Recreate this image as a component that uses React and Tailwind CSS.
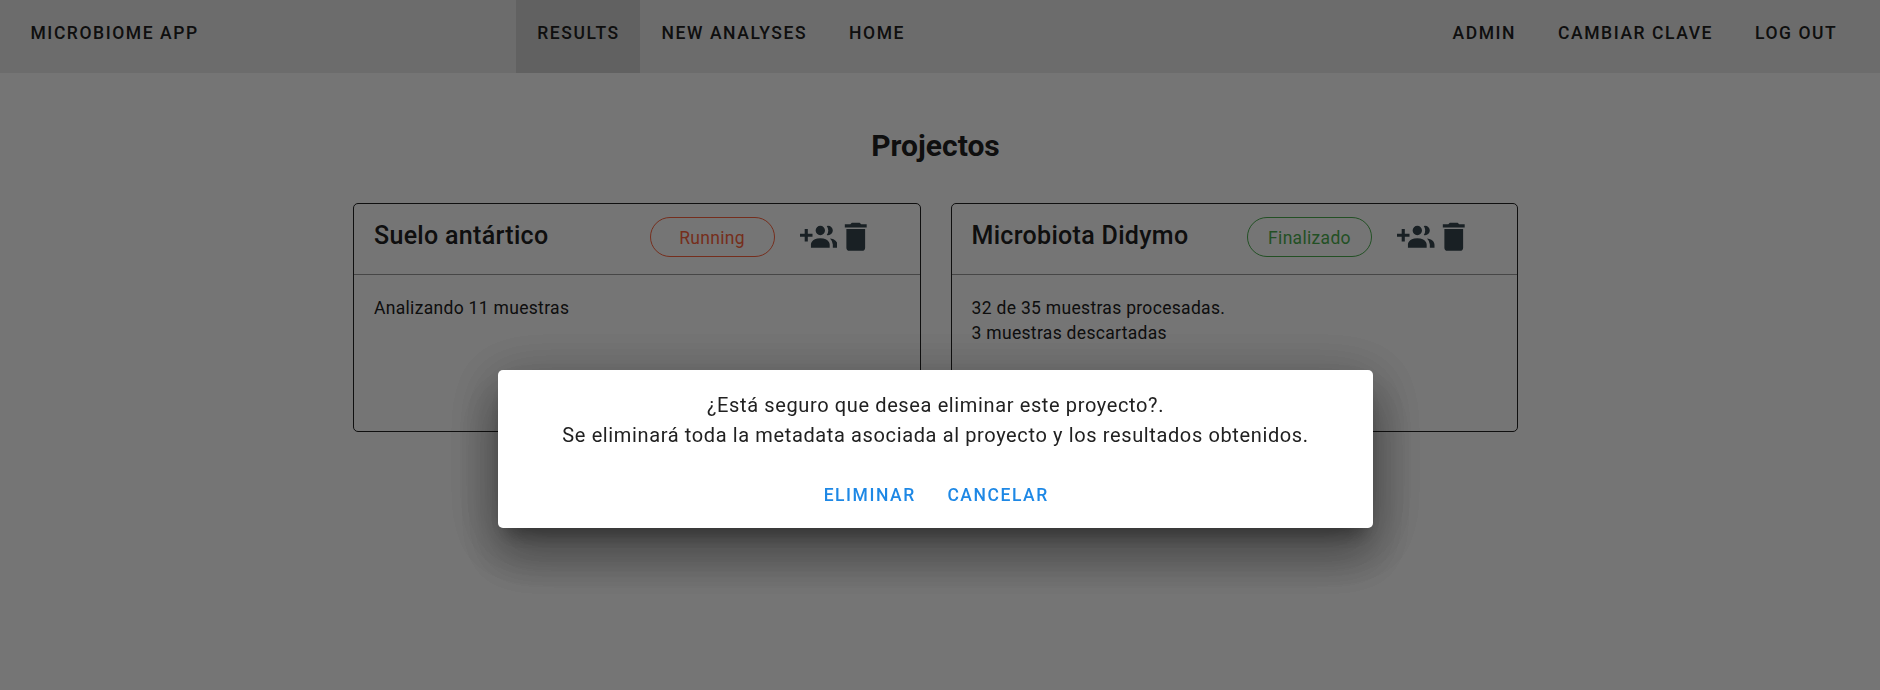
const PLUS_PEOPLE =
  'M19 17V19H7V17S7 13 13 13 19 17 19 17M16 8A3 3 0 1 0 13 11A3 3 0 0 0 16 8M19.2 13.06A5.6 5.6 0 0 1 21 17V19H24V17S24 13.55 19.2 13.06M18 5A2.91 2.91 0 0 0 17.11 5.14A5 5 0 0 1 17.11 10.86A2.91 2.91 0 0 0 18 11A3 3 0 0 0 18 5M8 10H5V7H3V10H0V12H3V15H5V12H8Z';
const TRASH =
  'M19,4H15.5L14.5,3H9.5L8.5,4H5V6H19V4M6,19A2,2 0 0,0 8,21H16A2,2 0 0,0 18,19V7H6V19Z';

function Icon({ path }) {
  return (
    <svg viewBox="0 0 24 24" className="size-[37.5px] shrink-0 fill-[#37474f]">
      <path d={path} />
    </svg>
  );
}

function NavButton({ children, active }) {
  return (
    <button
      className={`flex h-full items-center pr-[20.7px] pb-[6px] pl-[21.3px] uppercase ${active ? 'bg-[#d4d4d4]' : ''}`}
    >
      {children}
    </button>
  );
}

function ProjectCard({ title, status, statusClass, lines }) {
  return (
    <article className="flex h-[229px] flex-1 flex-col rounded-[5px] border border-[#212121]">
      <header className="flex h-[71px] items-start border-b border-black/40 pt-[13px] pl-5">
        <h3 className="w-[275.5px] pt-[1px] text-[25px] leading-[36px] font-medium tracking-[0.0125em]">
          {title}
        </h3>
        <span
          className={`flex h-10 w-[125px] items-center justify-center rounded-full border pt-[2px] text-[17.5px] tracking-[0.0178571429em] ${statusClass}`}
        >
          {status}
        </span>
        <div className="mt-[1px] ml-[25.3px] flex">
          <Icon path={PLUS_PEOPLE} />
          <Icon path={TRASH} />
        </div>
      </header>
      <div className="px-5 pt-[21px] text-[17.5px] leading-[25px] tracking-[0.0178571429em]">
        {lines.map((line) => (
          <p key={line}>{line}</p>
        ))}
      </div>
    </article>
  );
}

export default function App() {
  return (
    <div className="h-[690px] overflow-hidden bg-white font-[Roboto,sans-serif] text-[#212121]">
      <nav className="flex h-[73px] bg-[#ebebeb] pr-[22px] pl-[30.5px] text-[17.5px] font-medium tracking-[0.0892857143em]">
        <div className="flex w-[485.5px] items-center pb-[6px] uppercase">Microbiome App</div>
        <NavButton active>Results</NavButton>
        <NavButton>New Analyses</NavButton>
        <NavButton>Home</NavButton>
        <div className="ml-auto flex">
          <NavButton>Admin</NavButton>
          <NavButton>Cambiar clave</NavButton>
          <NavButton>Log out</NavButton>
        </div>
      </nav>

      <main className="ml-[353px] w-[1165px] pt-[50px]">
        <h2 className="h-20 text-center text-[30px] leading-[45px] font-bold">Projectos</h2>
        <div className="flex gap-[30px]">
          <ProjectCard
            title="Suelo antártico"
            status="Running"
            statusClass="border-[#ff6540] text-[#ff6540]"
            lines={['Analizando 11 muestras']}
          />
          <ProjectCard
            title="Microbiota Didymo"
            status="Finalizado"
            statusClass="border-[#4caf50] text-[#4caf50]"
            lines={['32 de 35 muestras procesadas.', '3 muestras descartadas']}
          />
        </div>
      </main>

      <div className="fixed inset-0 bg-black/54 pt-[370px] pl-[498px]">
        <div className="w-[875px] rounded-[5px] shadow-[0_14px_19px_-9px_rgba(0,0,0,0.2),0_30px_47.5px_4px_rgba(0,0,0,0.14),0_11px_57.5px_10px_rgba(0,0,0,0.12)]">
          <div
            role="dialog"
            className="h-[158px] rounded-[5px] bg-white text-center shadow-[0_14px_19px_-9px_rgba(0,0,0,0.2),0_30px_47.5px_4px_rgba(0,0,0,0.14),0_11px_57.5px_10px_rgba(0,0,0,0.12)]"
          >
            <div className="pt-5 text-[20px] leading-[30px] tracking-[0.03125em]">
              <p>¿Está seguro que desea eliminar este proyecto?.</p>
              <p>Se eliminará toda la metadata asociada al proyecto y los resultados obtenidos.</p>
            </div>
            <div className="flex justify-center gap-[31.5px] pt-[32px] pl-[1.5px] text-[17.5px] leading-[26px] font-medium tracking-[0.0892857143em] text-[#1e88e5]">
              <button className="uppercase">Eliminar</button>
              <button className="uppercase">Cancelar</button>
            </div>
          </div>
        </div>
      </div>
    </div>
  );
}
